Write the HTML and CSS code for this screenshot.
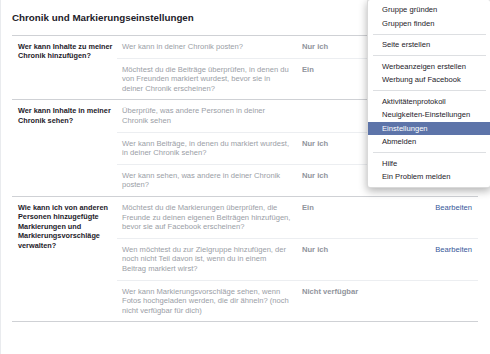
FILE: index.html
```html
<!DOCTYPE html>
<html lang="de">
<head>
    <meta charset="UTF-8">
    <title>Chronik und Markierungseinstellungen</title>
    <link rel="stylesheet" href="styles.css">
</head>
<body>
    <div class="page">
        <h2 class="title">Chronik und Markierungseinstellungen</h2>

        <div class="settings">
            <!-- Chronik: wer darf posten -->
            <div class="section">
                <div class="label">Wer kann Inhalte zu meiner Chronik hinzufügen?</div>
                <div class="rows">
                    <div class="row">
                        <div class="question">Wer kann in deiner Chronik posten?</div>
                        <div class="value">Nur ich</div>
                    </div>
                    <div class="row">
                        <div class="question">Möchtest du die Beiträge überprüfen, in denen du von Freunden markiert wurdest, bevor sie in deiner Chronik erscheinen?</div>
                        <div class="value">Ein</div>
                    </div>
                </div>
            </div>

            <!-- Chronik: wer darf sehen -->
            <div class="section">
                <div class="label">Wer kann Inhalte in meiner Chronik sehen?</div>
                <div class="rows">
                    <div class="row">
                        <div class="question">Überprüfe, was andere Personen in deiner Chronik sehen</div>
                        <div class="value"></div>
                    </div>
                    <div class="row">
                        <div class="question">Wer kann Beiträge, in denen du markiert wurdest, in deiner Chronik sehen?</div>
                        <div class="value">Nur ich</div>
                    </div>
                    <div class="row">
                        <div class="question">Wer kann sehen, was andere in deiner Chronik posten?</div>
                        <div class="value">Nur ich</div>
                    </div>
                </div>
            </div>

            <!-- Markierungen -->
            <div class="section">
                <div class="label">Wie kann ich von anderen Personen hinzugefügte Markierungen und Markierungsvorschläge verwalten?</div>
                <div class="rows">
                    <div class="row">
                        <div class="question">Möchtest du die Markierungen überprüfen, die Freunde zu deinen eigenen Beiträgen hinzufügen, bevor sie auf Facebook erscheinen?</div>
                        <div class="value">Ein</div>
                        <a class="edit" href="#">Bearbeiten</a>
                    </div>
                    <div class="row">
                        <div class="question">Wen möchtest du zur Zielgruppe hinzufügen, der noch nicht Teil davon ist, wenn du in einem Beitrag markiert wirst?</div>
                        <div class="value">Nur ich</div>
                        <a class="edit" href="#">Bearbeiten</a>
                    </div>
                    <div class="row">
                        <div class="question">Wer kann Markierungsvorschläge sehen, wenn Fotos hochgeladen werden, die dir ähneln? (noch nicht verfügbar für dich)</div>
                        <div class="value">Nicht verfügbar</div>
                    </div>
                </div>
            </div>
        </div>
    </div>

    <!-- Dropdown menu over the page -->
    <ul class="menu">
        <li>Gruppe gründen</li>
        <li>Gruppen finden</li>
        <li class="sep"></li>
        <li>Seite erstellen</li>
        <li class="sep"></li>
        <li>Werbeanzeigen erstellen</li>
        <li>Werbung auf Facebook</li>
        <li class="sep"></li>
        <li>Aktivitätenprotokoll</li>
        <li>Neuigkeiten-Einstellungen</li>
        <li class="active">Einstellungen</li>
        <li>Abmelden</li>
        <li class="sep"></li>
        <li>Hilfe</li>
        <li>Ein Problem melden</li>
    </ul>
</body>
</html>
```

FILE: styles.css
```css
body {
    font-family: "Liberation Sans", Arial, sans-serif;
    background-color: #fff;
    margin: 0;
    padding: 0;
    overflow: hidden;
}
.page {
    border-left: 1px solid #e9ebee;
    padding: 12px 12px 20px 11px;
    height: 322px;
}
.title {
    margin: 0 0 11px 0;
    font-size: 9.8px;
    line-height: 12px;
    font-weight: bold;
    color: #1d2129;
}
.settings {
    border-bottom: 1px solid #cfd1d5;
}
.section {
    display: flex;
    border-top: 1px solid #cfd1d5;
}
.label {
    width: 97px;
    padding: 6px 2px 6px 6px;
    font-size: 7.3px;
    line-height: 9.4px;
    font-weight: bold;
    color: #1d2129;
}
.rows {
    flex: 1;
}
.row {
    display: flex;
    padding: 6px 6px 6px 5px;
    font-size: 7.6px;
    line-height: 9.6px;
    border-top: 1px solid #eceef1;
}
.row:first-child {
    border-top: none;
}
.question {
    width: 170px;
    margin-right: 10px;
    color: #9a9ea6;
}
.value {
    width: 90px;
    font-weight: bold;
    color: #90949c;
}
.edit {
    margin-left: auto;
    color: #365899;
    text-decoration: none;
}
.menu {
    position: absolute;
    top: -1px;
    left: 367px;
    right: -1px;
    margin: 0;
    padding: 3px 0 3px 0;
    list-style: none;
    background-color: #fff;
    border: 1px solid rgba(0, 0, 0, 0.15);
    border-radius: 3px;
    box-shadow: 0 3px 8px rgba(0, 0, 0, 0.3);
    font-size: 7.6px;
}
.menu li {
    height: 13.5px;
    line-height: 13.5px;
    padding-left: 14px;
    color: #1d2129;
    white-space: nowrap;
}
.menu li.sep {
    height: 1px;
    margin: 3.5px 4px 3.5px 5px;
    padding: 0;
    background-color: #dddfe2;
}
.menu li.active {
    background-color: #5d74a9;
    color: #fff;
}
```
